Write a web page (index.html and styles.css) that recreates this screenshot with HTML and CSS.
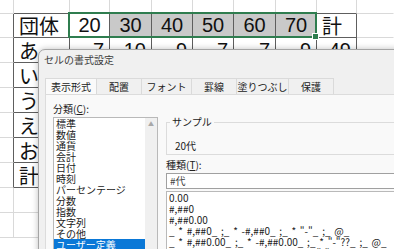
FILE: index.html
```html
<!DOCTYPE html>
<html lang="ja">
<head>
    <meta charset="UTF-8">
    <meta name="viewport" content="width=device-width, initial-scale=1.0">
    <title>セルの書式設定</title>
    <link rel="stylesheet" href="styles.css">
</head>
<body>

<div class="screen">

    <!-- Worksheet -->
    <div class="sheet">
        <div class="c"></div>
        <div class="c top"></div><div class="c top"></div><div class="c top"></div><div class="c top"></div>
        <div class="c top"></div><div class="c top"></div><div class="c top"></div><div class="c top"></div>
        <div class="c"></div>

        <div class="c side"></div>
        <div class="c d lab">団体</div>
        <div class="c d mid cur">20<span class="sel"><span class="handle"></span></span></div>
        <div class="c d mid hl">30</div>
        <div class="c d mid hl">40</div>
        <div class="c d mid hl">50</div>
        <div class="c d mid hl">60</div>
        <div class="c d mid hl">70</div>
        <div class="c d lab">計</div>
        <div class="c"></div>

        <div class="c side"></div>
        <div class="c d lab">あ</div>
        <div class="c d num">7</div><div class="c d num">10</div><div class="c d num">9</div>
        <div class="c d num">7</div><div class="c d num">7</div><div class="c d num">9</div>
        <div class="c d num">49</div>
        <div class="c"></div>

        <div class="c side"></div>
        <div class="c d lab">い</div>
        <div class="c d num">5</div><div class="c d num">8</div><div class="c d num">6</div>
        <div class="c d num">9</div><div class="c d num">4</div><div class="c d num">3</div>
        <div class="c d num">35</div>
        <div class="c"></div>

        <div class="c side"></div>
        <div class="c d lab">う</div>
        <div class="c d num">6</div><div class="c d num">7</div><div class="c d num">8</div>
        <div class="c d num">5</div><div class="c d num">6</div><div class="c d num">2</div>
        <div class="c d num">34</div>
        <div class="c"></div>

        <div class="c side"></div>
        <div class="c d lab">え</div>
        <div class="c d num">4</div><div class="c d num">9</div><div class="c d num">7</div>
        <div class="c d num">6</div><div class="c d num">5</div><div class="c d num">4</div>
        <div class="c d num">35</div>
        <div class="c"></div>

        <div class="c side"></div>
        <div class="c d lab">お</div>
        <div class="c d num">8</div><div class="c d num">6</div><div class="c d num">5</div>
        <div class="c d num">7</div><div class="c d num">8</div><div class="c d num">6</div>
        <div class="c d num">40</div>
        <div class="c"></div>

        <div class="c side"></div>
        <div class="c d lab">計</div>
        <div class="c d num">30</div><div class="c d num">40</div><div class="c d num">35</div>
        <div class="c d num">34</div><div class="c d num">30</div><div class="c d num">24</div>
        <div class="c d num">193</div>
        <div class="c"></div>

        <div class="c"></div><div class="c"></div><div class="c"></div><div class="c"></div><div class="c"></div>
        <div class="c"></div><div class="c"></div><div class="c"></div><div class="c"></div><div class="c"></div>
        <div class="c"></div><div class="c"></div><div class="c"></div><div class="c"></div><div class="c"></div>
        <div class="c"></div><div class="c"></div><div class="c"></div><div class="c"></div><div class="c"></div>
    </div>

    <!-- Format cells dialog -->
    <div class="dialog">
        <div class="dlg-title">セルの書式設定</div>

        <div class="tabs">
            <div class="tab w52 active">表示形式</div>
            <div class="tab w45">配置</div>
            <div class="tab w50">フォント</div>
            <div class="tab w45">罫線</div>
            <div class="tab w52">塗りつぶし</div>
            <div class="tab w45">保護</div>
        </div>

        <div class="panel">
            <div class="category">
                <div class="lbl">分類(<u>C</u>):</div>
                <div class="listbox">
                    <div class="items">
                        <div class="item">標準</div>
                        <div class="item">数値</div>
                        <div class="item">通貨</div>
                        <div class="item">会計</div>
                        <div class="item">日付</div>
                        <div class="item">時刻</div>
                        <div class="item">パーセンテージ</div>
                        <div class="item">分数</div>
                        <div class="item">指数</div>
                        <div class="item">文字列</div>
                        <div class="item">その他</div>
                        <div class="item selected">ユーザー定義</div>
                    </div>
                    <div class="scroll"><span class="arrow">▲</span></div>
                </div>
            </div>

            <div class="detail">
                <fieldset class="sample">
                    <legend>サンプル</legend>
                    <div class="sample-val">20代</div>
                </fieldset>
                <div class="lbl">種類(<u>T</u>):</div>
                <div class="input">#代</div>
                <div class="fmt-list">
                    <div class="fmt">0.00</div>
                    <div class="fmt">#,##0</div>
                    <div class="fmt">#,##0.00</div>
                    <div class="fmt">_ * #,##0_ ;_ * -#,##0_ ;_ * "-"_ ;_ @_</div>
                    <div class="fmt">_ * #,##0.00_ ;_ * -#,##0.00_ ;_ * "-"??_ ;_ @_</div>
                    <div class="fmt">_ ¥* #,##0_ ;_ ¥* -#,##0_ ;_ ¥* "-"_ ;_ @_</div>
                </div>
            </div>
        </div>
    </div>

</div>

</body>
</html>
```

FILE: styles.css
```css
body {
    margin: 0;
}
.screen {
    position: relative;
    width: 394px;
    height: 249px;
    overflow: hidden;
    background: #fff;
}

/* worksheet */
.sheet {
    display: grid;
    grid-template-columns: 14px 56px 40px 42px 41px 41px 42px 41px 40px 1fr;
    grid-template-rows: 14px 24px repeat(8, 25px);
    font-family: "Liberation Sans", "Noto Sans CJK JP", sans-serif;
    font-size: 20px;
    color: #111;
}
.c {
    box-sizing: border-box;
    display: flex;
    align-items: center;
    padding: 0 5px;
    border-right: 1px solid #d9d9d9;
    border-bottom: 1px solid #d9d9d9;
    white-space: nowrap;
    overflow: hidden;
}
.c:nth-child(10n) {
    border-right-color: transparent;
}
.top {
    border-bottom-color: #5e5e5e;
}
.side {
    border-right-color: #5e5e5e;
}
.d {
    border-right-color: #5e5e5e;
    border-bottom-color: #5e5e5e;
}
.lab {
    justify-content: flex-start;
}
.mid {
    justify-content: center;
}
.num {
    justify-content: flex-end;
}
.hl {
    background: #c9c9c9;
}
.cur {
    position: relative;
    overflow: visible;
}
.sel {
    position: absolute;
    left: -2px;
    top: -2px;
    width: 249px;
    height: 26px;
    box-sizing: border-box;
    border: 2px solid #2f7d4f;
}
.handle {
    position: absolute;
    right: -4px;
    bottom: -4px;
    width: 5px;
    height: 5px;
    background: #2f7d4f;
    border: 1px solid #fff;
}

/* dialog */
.dialog {
    position: absolute;
    left: 38px;
    top: 49px;
    width: 380px;
    height: 215px;
    background: #f0f0f0;
    border: 1px solid #a5a5a5;
    border-radius: 7px 0 0 0;
    box-shadow: 0 0 6px rgba(0, 0, 0, 0.25);
    font-family: "Noto Sans CJK JP", sans-serif;
    font-size: 10px;
    color: #222;
}
.dlg-title {
    height: 28px;
    line-height: 20px;
    padding-left: 5px;
    color: #3c3c3c;
}
.tabs {
    display: flex;
    height: 16px;
    margin-left: 6px;
}
.tab {
    box-sizing: border-box;
    height: 16px;
    line-height: 15px;
    text-align: center;
    border: 1px solid #dadada;
    border-bottom: none;
    border-left: none;
    background: #f0f0f0;
}
.tab:first-child {
    border-left: 1px solid #dadada;
}
.tab.active {
    background: #fafafa;
}
.w45 { width: 45px; }
.w50 { width: 50px; }
.w52 { width: 52px; }

.panel {
    display: flex;
    gap: 8px;
    height: 200px;
    margin-left: 6px;
    padding: 8px 0 0 7px;
    background: #f9f9f9;
    border: 1px solid #dcdcdc;
}
.lbl {
    height: 12px;
    line-height: 12px;
    margin-bottom: 2px;
}
.category {
    width: 105px;
    flex: none;
}
.listbox {
    display: flex;
    height: 140px;
    background: #fff;
    border: 1px solid #b9b9b9;
}
.items {
    flex: 1;
}
.item {
    height: 11px;
    line-height: 11px;
    padding-left: 2px;
    white-space: nowrap;
}
.item.selected {
    background: #0a78d7;
    color: #fff;
}
.scroll {
    width: 12px;
    background: #f0f0f0;
    text-align: center;
}
.arrow {
    display: block;
    margin-top: 3px;
    font-size: 6px;
    line-height: 6px;
    color: #a8a8a8;
}

.detail {
    width: 250px;
    flex: none;
}
.sample {
    margin: 13px 0 4px;
    padding: 12px 8px 2px;
    border: 1px solid #dcdcdc;
    min-inline-size: 0;
}
.sample legend {
    margin-left: -5px;
    padding: 0 2px;
    line-height: 12px;
}
.sample-val {
    line-height: 12px;
}
.input {
    box-sizing: border-box;
    height: 16px;
    margin: 0 0 2px;
    padding-left: 3px;
    line-height: 14px;
    background: #fff;
    border: 1px solid #a0a0a0;
    color: #444;
}
.fmt-list {
    height: 80px;
    background: #fff;
    border: 1px solid #b9b9b9;
}
.fmt {
    height: 11px;
    line-height: 11px;
    padding-left: 2px;
    white-space: pre;
    word-spacing: 1.5px;
}
```
